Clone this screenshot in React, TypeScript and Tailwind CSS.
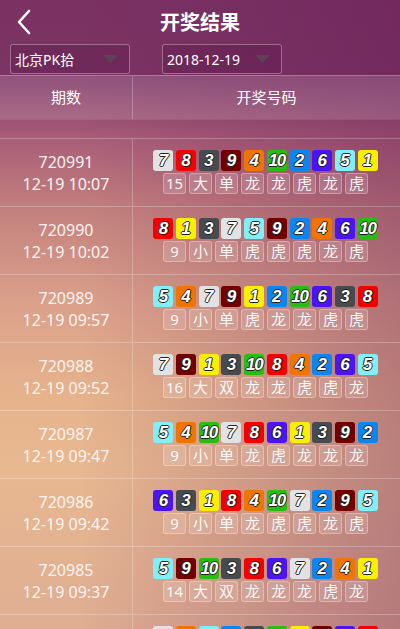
import React from "react";

const BALL: Record<number, string> = {
  1: "bg-[#f8f000]",
  2: "bg-[#0a86f0]",
  3: "bg-[#474a4e]",
  4: "bg-[#f07400]",
  5: "bg-[#80f0f6]",
  6: "bg-[#4a14f4]",
  7: "bg-[#e2e2e4]",
  8: "bg-[#f40000]",
  9: "bg-[#720000]",
  10: "bg-[#26be10]",
};

type Row = { p: string; t: string; n: number[]; s: string[] };

const rows: Row[] = [
  { p: "720991", t: "12-19 10:07", n: [7, 8, 3, 9, 4, 10, 2, 6, 5, 1], s: ["15", "大", "单", "龙", "龙", "虎", "龙", "虎"] },
  { p: "720990", t: "12-19 10:02", n: [8, 1, 3, 7, 5, 9, 2, 4, 6, 10], s: ["9", "小", "单", "虎", "虎", "虎", "龙", "虎"] },
  { p: "720989", t: "12-19 09:57", n: [5, 4, 7, 9, 1, 2, 10, 6, 3, 8], s: ["9", "小", "单", "虎", "龙", "龙", "虎", "虎"] },
  { p: "720988", t: "12-19 09:52", n: [7, 9, 1, 3, 10, 8, 4, 2, 6, 5], s: ["16", "大", "双", "龙", "龙", "虎", "虎", "龙"] },
  { p: "720987", t: "12-19 09:47", n: [5, 4, 10, 7, 8, 6, 1, 3, 9, 2], s: ["9", "小", "单", "龙", "虎", "龙", "龙", "龙"] },
  { p: "720986", t: "12-19 09:42", n: [6, 3, 1, 8, 4, 10, 7, 2, 9, 5], s: ["9", "小", "单", "龙", "虎", "虎", "龙", "虎"] },
  { p: "720985", t: "12-19 09:37", n: [5, 9, 10, 3, 8, 6, 7, 2, 4, 1], s: ["14", "大", "双", "龙", "龙", "龙", "虎", "龙"] },
  { p: "720984", t: "12-19 09:32", n: [7, 4, 5, 2, 3, 10, 1, 9, 6, 8], s: ["11", "大", "单", "龙", "虎", "龙", "虎", "虎"] },
];

const Chevron = () => (
  <svg width="16" height="26" viewBox="0 0 16 26" fill="none">
    <polyline points="13,2 3,13 13,24" stroke="white" strokeWidth="2.6" strokeLinecap="round" strokeLinejoin="round" />
  </svg>
);

const Select = ({ label }: { label: string }) => (
  <div className="w-[120px] h-[30px] rounded-[3px] border border-[#b68aa6]/70 bg-[#4a0d3a]/25 flex items-center justify-between pl-[4px] pr-[11px]">
    <span className="text-[14px] text-white">{label}</span>
    <svg width="15" height="8" viewBox="0 0 15 8">
      <polygon points="0,0 15,0 7.5,8" fill="#5a4656" fillOpacity="0.85" />
    </svg>
  </div>
);

export default function App() {
  return (
    <div
      className="w-[400px] h-[629px] overflow-hidden relative text-white bg-[linear-gradient(to_right,rgba(0,0,0,0)_20%,rgba(100,25,85,0.35)_100%),linear-gradient(to_bottom,#7b3263_0%,#7c3464_12%,#a95e78_22%,#c4827e_34%,#daa08a_48%,#e6b28c_62%,#e8b890_74%,#dfad92_100%)]"
      style={{ fontFamily: '"Noto Sans", "Noto Sans CJK SC", sans-serif' }}
    >
      {/* Title */}
      <div className="h-[44px] flex items-center relative">
        <div className="absolute left-[16px] top-[9px]">
          <Chevron />
        </div>
        <div className="w-full text-center text-[20px] font-bold leading-none pt-[1px]">开奖结果</div>
      </div>
      {/* Selects */}
      <div className="h-[31px] flex items-start pl-[10px] gap-[32px]">
        <Select label="北京PK拾" />
        <Select label="2018-12-19" />
      </div>
      {/* Table header */}
      <div className="h-[44px] flex border-t border-white/25 bg-white/15 text-[15px]">
        <div className="w-[133px] border-r border-white/25 flex items-center justify-center">期数</div>
        <div className="flex-1 flex items-center justify-center">开奖号码</div>
      </div>
      <div className="h-[20px] border-t border-white/10 border-b border-b-white/25" />
      {rows.map((r) => (
        <div key={r.p} className="h-[68px] flex border-b border-white/25">
          <div className="w-[133px] border-r border-white/25 flex flex-col items-center justify-center text-[16px] leading-[22px] text-[#fbf3f0]">
            <div>{r.p}</div>
            <div>{r.t}</div>
          </div>
          <div className="flex-1 flex flex-col items-center justify-center gap-[2px] pr-[2px] pb-[2px]">
            <div className="flex gap-[2.7px]">
              {r.n.map((n, i) => (
                <div
                  key={i}
                  className={`w-[20px] h-[21px] rounded-[3px] flex items-center justify-center italic font-bold text-[17px] leading-none text-white [text-shadow:-1px_0_#222,1px_0_#222,0_1px_#222,0_-1px_#222] ${BALL[n]}`}
                  style={{ fontFamily: '"Liberation Sans", Arial, sans-serif', letterSpacing: n === 10 ? "-1.2px" : undefined }}
                >
                  {n}
                </div>
              ))}
            </div>
            <div className="flex gap-[3px]">
              {r.s.map((s, i) => (
                <div
                  key={i}
                  className="w-[23px] h-[21px] rounded-[3px] border border-white/30 bg-white/15 flex items-center justify-center text-[15px] leading-none text-white/95"
                >
                  {s}
                </div>
              ))}
            </div>
          </div>
        </div>
      ))}
    </div>
  );
}
